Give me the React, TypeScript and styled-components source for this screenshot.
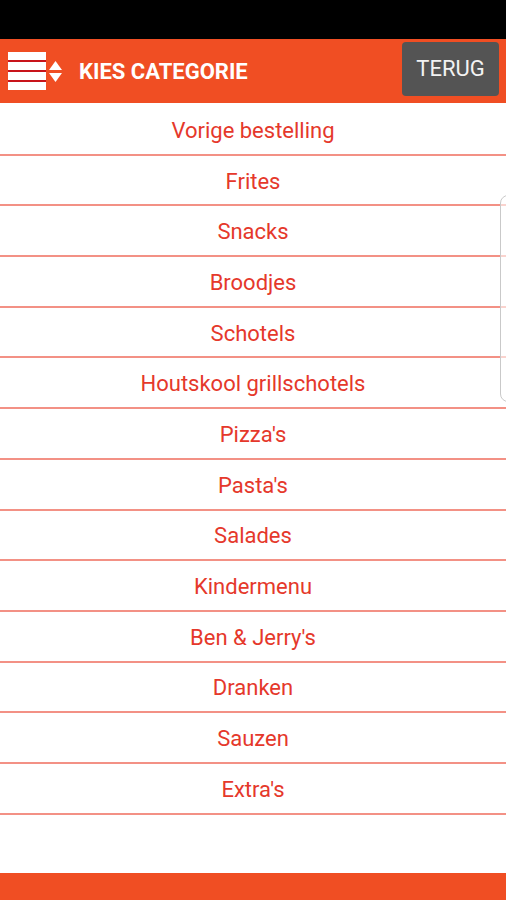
import React from 'react';
import styled, { createGlobalStyle } from 'styled-components';

const GlobalStyle = createGlobalStyle`
    html, body {
        margin: 0;
        padding: 0;
        background: #ffffff;
    }
    body {
        font-family: Roboto, 'Liberation Sans', sans-serif;
    }
`;

const Screen = styled.div`
    position: relative;
    display: flex;
    flex-direction: column;
    min-height: 900px;
    width: 506px;
    overflow: hidden;
`;

const StatusBar = styled.div`
    height: 39px;
    background: #000000;
`;

const Header = styled.div`
    height: 64px;
    background: #f04e23;
    display: flex;
    align-items: center;
    padding: 0 7px 0 8px;
`;

const MenuIcon = styled.div`
    display: flex;
    align-items: center;
    gap: 3px;
    margin-right: 17px;
`;

const Bars = styled.div`
    width: 38px;
    display: flex;
    flex-direction: column;
    gap: 2px;
    background: #c8141a;
`;

const Bar = styled.div`
    height: 8px;
    background: #ffffff;
`;

const Title = styled.h1`
    flex: 1;
    margin: 0;
    color: #ffffff;
    font-size: 22px;
    font-weight: 700;
`;

const BackButton = styled.button`
    width: 97px;
    height: 54px;
    border: none;
    border-radius: 4px;
    background: #545454;
    color: #f2f2f2;
    font-family: Roboto, 'Liberation Sans', sans-serif;
    font-size: 22px;
    padding: 0 0 2px;
    margin-top: -4px;
`;

const List = styled.ul`
    list-style: none;
    margin: 0;
    padding: 2px 0 0;
`;

const Row = styled.li`
    height: 50.7px;
    box-sizing: border-box;
    border-bottom: 2px solid #f39185;
    display: flex;
    align-items: center;
    justify-content: center;
    color: #e5382b;
    font-size: 22px;
    padding-top: 2px;
`;

const Spacer = styled.div`
    flex: 1;
`;

const Footer = styled.div`
    height: 27px;
    background: #f04e23;
`;

const EdgeHandle = styled.div`
    position: absolute;
    right: -10px;
    top: 195px;
    width: 14px;
    height: 205px;
    border: 1px solid #c9c9c9;
    border-radius: 8px;
    background: rgba(255, 255, 255, 0.6);
`;

const categories = [
    'Vorige bestelling',
    'Frites',
    'Snacks',
    'Broodjes',
    'Schotels',
    'Houtskool grillschotels',
    "Pizza's",
    "Pasta's",
    'Salades',
    'Kindermenu',
    "Ben & Jerry's",
    'Dranken',
    'Sauzen',
    "Extra's",
];

const SortArrows = () => (
    <svg width="13" height="21" viewBox="0 0 13 21">
        <polygon points="6.5,0 13,9 0,9" fill="#ffffff" />
        <polygon points="0,12 13,12 6.5,21" fill="#ffffff" />
    </svg>
);

export default function App() {
    return (
        <Screen>
            <GlobalStyle />
            <StatusBar />
            <Header>
                <MenuIcon>
                    <Bars>
                        <Bar />
                        <Bar />
                        <Bar />
                        <Bar />
                    </Bars>
                    <SortArrows />
                </MenuIcon>
                <Title>KIES CATEGORIE</Title>
                <BackButton>TERUG</BackButton>
            </Header>
            <List>
                {categories.map((name) => (
                    <Row key={name}>{name}</Row>
                ))}
            </List>
            <Spacer />
            <Footer />
            <EdgeHandle />
        </Screen>
    );
}
